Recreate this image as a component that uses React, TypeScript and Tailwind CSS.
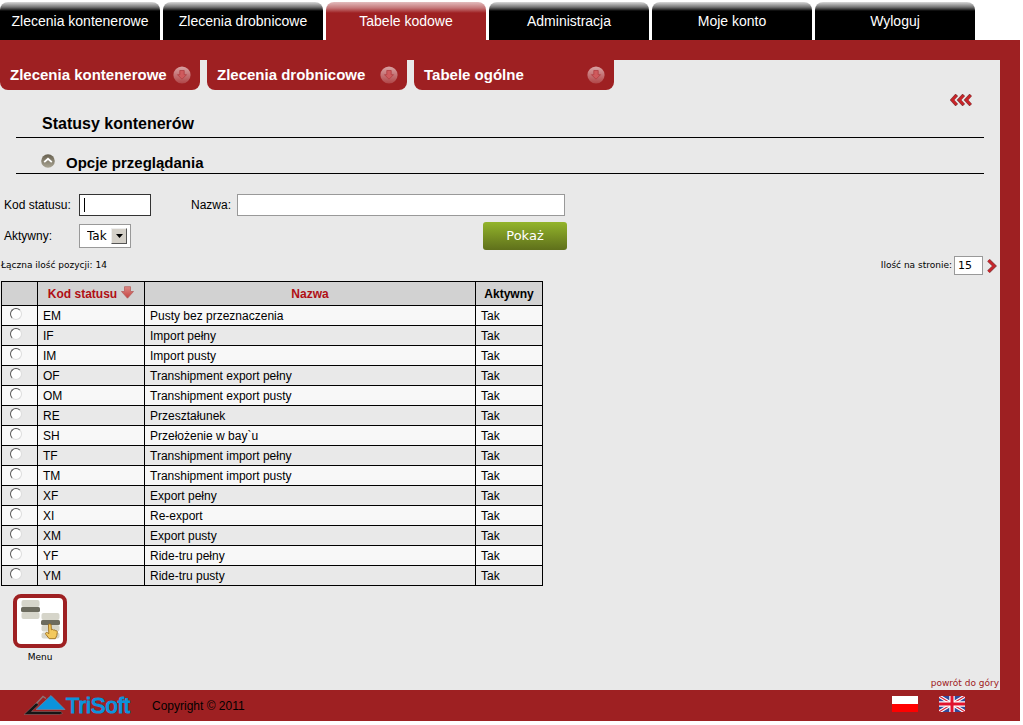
import React, { useState } from "react";

interface Status {
  code: string;
  name: string;
}

const tabs = [
  "Zlecenia kontenerowe",
  "Zlecenia drobnicowe",
  "Tabele kodowe",
  "Administracja",
  "Moje konto",
  "Wyloguj",
];

const subTabs = ["Zlecenia kontenerowe", "Zlecenia drobnicowe", "Tabele ogólne"];

const statuses: Status[] = [
  { code: "EM", name: "Pusty bez przeznaczenia" },
  { code: "IF", name: "Import pełny" },
  { code: "IM", name: "Import pusty" },
  { code: "OF", name: "Transhipment export pełny" },
  { code: "OM", name: "Transhipment export pusty" },
  { code: "RE", name: "Przeształunek" },
  { code: "SH", name: "Przełożenie w bay`u" },
  { code: "TF", name: "Transhipment import pełny" },
  { code: "TM", name: "Transhipment import pusty" },
  { code: "XF", name: "Export pełny" },
  { code: "XI", name: "Re-export" },
  { code: "XM", name: "Export pusty" },
  { code: "YF", name: "Ride-tru pełny" },
  { code: "YM", name: "Ride-tru pusty" },
];

const CircleArrow: React.FC = () => (
  <svg width="18" height="18" viewBox="0 0 18 18" aria-hidden="true">
    <defs>
      <linearGradient id="disc" x1="0" y1="0" x2="0" y2="1">
        <stop offset="0" stopColor="#d9a3a4" />
        <stop offset="1" stopColor="#b04547" />
      </linearGradient>
    </defs>
    <circle cx="9" cy="9" r="8.6" fill="url(#disc)" />
    <path
      d="M6.8 4.5h4.4v4.2h2.3L9 13.2 4.5 8.7h2.3z"
      fill="#cf5a5d"
      stroke="#b03f42"
      strokeWidth="0.8"
    />
  </svg>
);

const SortArrow: React.FC = () => (
  <svg width="13" height="13" viewBox="0 0 13 13" aria-hidden="true">
    <defs>
      <linearGradient id="sort" x1="0" y1="0" x2="0" y2="1">
        <stop offset="0" stopColor="#dd8a86" />
        <stop offset="1" stopColor="#c4423f" />
      </linearGradient>
    </defs>
    <path
      d="M3.5 .7h6v4.8h3L6.5 12.2.5 5.5h3z"
      fill="url(#sort)"
      stroke="#b5615f"
      strokeWidth="0.8"
    />
  </svg>
);

const BackArrows: React.FC = () => (
  <svg width="22" height="12" viewBox="0 0 22 12" fill="none" aria-hidden="true">
    {[0, 7, 14].map((x) => (
      <g key={x}>
        <path d={`M${x + 6.8} .8 L${x + 2} 6 L${x + 6.8} 11.2`} stroke="#8c3638" strokeWidth="3.4" />
        <path d={`M${x + 6.5} 1.5 L${x + 2.2} 6 L${x + 6.5} 10.5`} stroke="#cf2227" strokeWidth="2" />
      </g>
    ))}
  </svg>
);

const NextArrow: React.FC = () => (
  <svg width="10" height="14" viewBox="0 0 10 14" fill="none" aria-hidden="true">
    <path d="M1.5 1.2 7.5 7l-6 5.8" stroke="#8d4345" strokeWidth="3.6" />
    <path d="M1.5 1.2 7.2 7l-5.7 5.8" stroke="#c9252b" strokeWidth="2.2" />
  </svg>
);

const CollapseIcon: React.FC = () => (
  <svg width="14" height="14" viewBox="0 0 14 14" aria-hidden="true">
    <defs>
      <linearGradient id="knob" x1="0" y1="0" x2="0" y2="1">
        <stop offset="0" stopColor="#67604f" />
        <stop offset="1" stopColor="#aaa594" />
      </linearGradient>
    </defs>
    <circle cx="7" cy="7" r="6.8" fill="url(#knob)" />
    <path d="M3.2 8.2 7 4.8l3.8 3.4" fill="none" stroke="#fff" strokeWidth="1.8" />
  </svg>
);

const MenuIcon: React.FC = () => (
  <svg width="42" height="42" viewBox="0 0 42 42" aria-hidden="true">
    <g fill="#d6d5ca">
      <rect x="2.5" y="0" width="18" height="7" rx="2" />
      <rect x="2.5" y="12" width="18" height="7" rx="2" />
      <rect x="22.5" y="13" width="18" height="7" rx="2" />
      <rect x="22.5" y="25" width="18" height="6.5" rx="2" />
      <rect x="22.5" y="32.5" width="18" height="6" rx="2" />
    </g>
    <rect x="2" y="7" width="19" height="5" rx="1.5" fill="#6c6b5e" />
    <rect x="22" y="20" width="19" height="5" rx="1.5" fill="#6c6b5e" />
    <path
      d="M29.5 25c0-1.5 2.5-1.5 2.6 0l.3 4.8c1-.6 1.9-.4 2.2.4 1-.5 1.8-.1 2 .6 1.2-.3 1.8.3 1.7 1.4l-.5 3.4-1.5 3.1h-6.1l-3.4-4.4c-.9-1.2.6-2.5 1.7-1.6l1.3 1z"
      fill="#f3c95d"
      stroke="#9c6c1a"
      strokeWidth="0.9"
    />
  </svg>
);

const Logo: React.FC = () => (
  <svg width="108" height="24" viewBox="0 0 108 24" role="img" aria-label="TriSoft">
    <path d="M10.5 11.5 19 2.5l3 2" fill="none" stroke="#8c7374" strokeWidth="1.4" />
    <path d="M0 20.5 12 9l3 1.5L7.5 17.5H37l1.5 2-3 1z" fill="#151515" stroke="#8c7374" strokeWidth="0.5" />
    <path d="M12 15.5 27 1.5l14 14z" fill="#0c93dc" stroke="#6c8ba8" strokeWidth="0.7" />
    <text
      x="42"
      y="19"
      fontFamily="'Liberation Sans', Arial, sans-serif"
      fontSize="22"
      fill="#0c93dc"
      stroke="#0c93dc"
      strokeWidth="1.2"
    >
      TriSoft
    </text>
  </svg>
);

const PolishFlag: React.FC = () => (
  <svg width="26" height="16" viewBox="0 0 26 16" aria-hidden="true">
    <path d="M0 0h26v8H0z" fill="#fff" />
    <path d="M0 8h26v8H0z" fill="#f00" />
  </svg>
);

const BritishFlag: React.FC = () => (
  <svg width="26" height="16" viewBox="0 0 26 16" aria-hidden="true">
    <path d="M0 0h26v16H0z" fill="#31499a" />
    <path d="M0 0l26 16M26 0L0 16" stroke="#fff" strokeWidth="3.4" />
    <path d="M0 0l26 16M26 0L0 16" stroke="#d8263c" strokeWidth="1.1" />
    <path d="M13 0v16M0 8h26" stroke="#fff" strokeWidth="5.4" />
    <path d="M13 0v16M0 8h26" stroke="#e0122e" strokeWidth="3" />
  </svg>
);

const TopTabs: React.FC = () => (
  <nav className="flex gap-[3px] pt-[2px]">
    {tabs.map((tab) => (
      <a
        key={tab}
        href="#"
        className={`flex h-[38px] w-40 items-center justify-center rounded-t-lg text-sm text-white ${
          tab === "Tabele kodowe"
            ? "bg-[linear-gradient(#e3bcbd_0,#c47779_6px,#9e2022_11px)]"
            : "bg-[linear-gradient(#d8d8d8_0,#777_5px,#222_8px,#000_9px)]"
        }`}
      >
        {tab}
      </a>
    ))}
  </nav>
);

const SubTabs: React.FC = () => (
  <nav className="flex gap-[7px]">
    {subTabs.map((tab) => (
      <a
        key={tab}
        href="#"
        className="flex h-[30px] w-[200px] items-center justify-between rounded-b-lg bg-[#9e2022] pr-[9px] pl-[10px] text-[15px] font-bold text-white"
      >
        {tab}
        <CircleArrow />
      </a>
    ))}
  </nav>
);

const Filters: React.FC = () => {
  const [code, setCode] = useState("");
  const [name, setName] = useState("");

  return (
    <form className="flex w-[567px] flex-col pt-5 pl-1 text-xs" onSubmit={(e) => e.preventDefault()}>
      <div className="flex h-[22px] items-center">
        <label htmlFor="code" className="w-[75px]">
          Kod statusu:
        </label>
        <div className="relative">
          <input
            id="code"
            autoFocus
            value={code}
            onChange={(e) => setCode(e.target.value)}
            className="block h-[22px] w-[72px] border border-[#333] bg-white px-1 outline-none placeholder-shown:caret-transparent"
            placeholder=" "
          />
          {!code && (
            <span className="pointer-events-none absolute top-1 left-[5px] h-[14px] w-px bg-black" />
          )}
        </div>
        <label htmlFor="name" className="w-[86px] pl-10">
          Nazwa:
        </label>
        <input
          id="name"
          value={name}
          onChange={(e) => setName(e.target.value)}
          className="h-[22px] w-[328px] border border-[#999] bg-white px-1 outline-none"
        />
      </div>
      <div className="flex items-center pt-[6px]">
        <label htmlFor="active" className="w-[75px]">
          Aktywny:
        </label>
        <div className="relative">
          <select
            id="active"
            className="block h-6 w-[52px] appearance-none border border-[#999] bg-white pl-[7px] font-['DejaVu_Sans',sans-serif] text-xs outline-none"
          >
            <option>Tak</option>
            <option>Nie</option>
          </select>
          <span className="pointer-events-none absolute top-1 right-1 flex size-4 items-center justify-center border border-t-[#eee] border-r-[#555] border-b-[#555] border-l-[#eee] bg-[#d4d0c8]">
            <svg width="7" height="4" viewBox="0 0 7 4" aria-hidden="true">
              <path d="M0 0h7L3.5 4z" fill="#000" />
            </svg>
          </span>
        </div>
        <button
          type="submit"
          className="ml-auto h-7 w-[84px] rounded-[3px] bg-linear-to-b from-[#93b52b] to-[#5f701b] font-['DejaVu_Sans',sans-serif] text-[13px] text-white"
        >
          Pokaż
        </button>
      </div>
    </form>
  );
};

const StatusTable: React.FC = () => {
  const [selected, setSelected] = useState("");

  return (
    <table className="ml-px w-[542px] table-fixed border-collapse text-xs [&_td]:border [&_td]:border-black [&_th]:border [&_th]:border-black">
      <colgroup>
        <col className="w-9" />
        <col className="w-[107px]" />
        <col className="w-[331px]" />
        <col className="w-[67px]" />
      </colgroup>
      <thead>
        <tr className="h-6 bg-[#d2d2d2]">
          <th></th>
          <th className="p-0">
            <a href="#" className="flex items-start justify-center gap-1 text-[#b00e14]">
              Kod statusu
              <SortArrow />
            </a>
          </th>
          <th className="p-0">
            <a href="#" className="text-[#b00e14]">
              Nazwa
            </a>
          </th>
          <th className="p-0">Aktywny</th>
        </tr>
      </thead>
      <tbody>
        {statuses.map((status) => (
          <tr key={status.code} className="h-5 odd:bg-[#f8f8f8] even:bg-[#e9e9e9]">
            <td className="p-0 pb-[3px] pl-2">
              <input
                type="radio"
                name="status"
                aria-label={status.code}
                checked={selected === status.code}
                onChange={() => setSelected(status.code)}
                className="block size-3 appearance-none rounded-full border border-t-[#555] border-r-[#ddd] border-b-[#ddd] border-l-[#555] bg-white checked:bg-[radial-gradient(#000_2px,#fff_3px)]"
              />
            </td>
            <td className="p-0 pl-[5px] leading-4">{status.code}</td>
            <td className="p-0 pl-[5px] leading-4">{status.name}</td>
            <td className="p-0 pl-[5px] leading-4">Tak</td>
          </tr>
        ))}
      </tbody>
    </table>
  );
};

const App: React.FC = () => {
  return (
    <div className="mr-[3px] font-['Liberation_Sans',Arial,sans-serif] text-black">
      <TopTabs />
      <div className="bg-[#9e2022] pt-5 pr-5">
        <main className="bg-[#e9e9e9]">
          <SubTabs />
          <div className="flex justify-end pt-1 pr-7">
            <a href="#" aria-label="Wstecz">
              <BackArrows />
            </a>
          </div>
          <h1 className="mr-4 ml-4 flex h-8 items-end border-b border-black pb-px pl-[26px] text-base font-bold">
            Statusy kontenerów
          </h1>
          <h2 className="mr-4 ml-4 flex h-9 items-end gap-[11px] border-b border-black pl-[25px] text-[15px] leading-5 font-bold">
            <button type="button" aria-label="Zwiń" className="pb-[5px]">
              <CollapseIcon />
            </button>
            Opcje przeglądania
          </h2>
          <Filters />
          <div className="flex h-[31px] items-center justify-between pl-px font-['DejaVu_Sans',sans-serif] text-[9px]">
            <span>Łączna ilość pozycji: 14</span>
            <div className="flex items-center gap-[2px] pr-[3px]">
              <label htmlFor="page-size">Ilość na stronie:</label>
              <input
                id="page-size"
                defaultValue="15"
                className="h-[19px] w-[29px] border border-[#999] bg-white px-[3px] text-[11px] outline-none"
              />
              <a href="#" aria-label="Następna strona" className="pl-[2px]">
                <NextArrow />
              </a>
            </div>
          </div>
          <StatusTable />
          <div className="flex pt-2">
            <a
              href="#"
              className="flex w-20 flex-col items-center gap-[2px] font-['DejaVu_Sans',sans-serif] text-[9px] leading-[14px]"
            >
              <span className="flex size-[54px] items-center justify-center rounded-lg border-4 border-[#9e2022] bg-white">
                <MenuIcon />
              </span>
              Menu
            </a>
          </div>
          <div className="flex justify-end pt-3 pr-px">
            <a href="#" className="font-['DejaVu_Sans',sans-serif] text-[9px] leading-[14px] text-[#9e2022]">
              powrót do góry
            </a>
          </div>
        </main>
      </div>
      <footer className="flex h-[31px] items-center bg-[#9e2022] pr-[55px] pl-6 text-xs">
        <Logo />
        <span className="pl-5">Copyright © 2011</span>
        <div className="ml-auto flex gap-[21px] pb-1">
          <a href="#" aria-label="Polski">
            <PolishFlag />
          </a>
          <a href="#" aria-label="English">
            <BritishFlag />
          </a>
        </div>
      </footer>
    </div>
  );
};

export default App;
